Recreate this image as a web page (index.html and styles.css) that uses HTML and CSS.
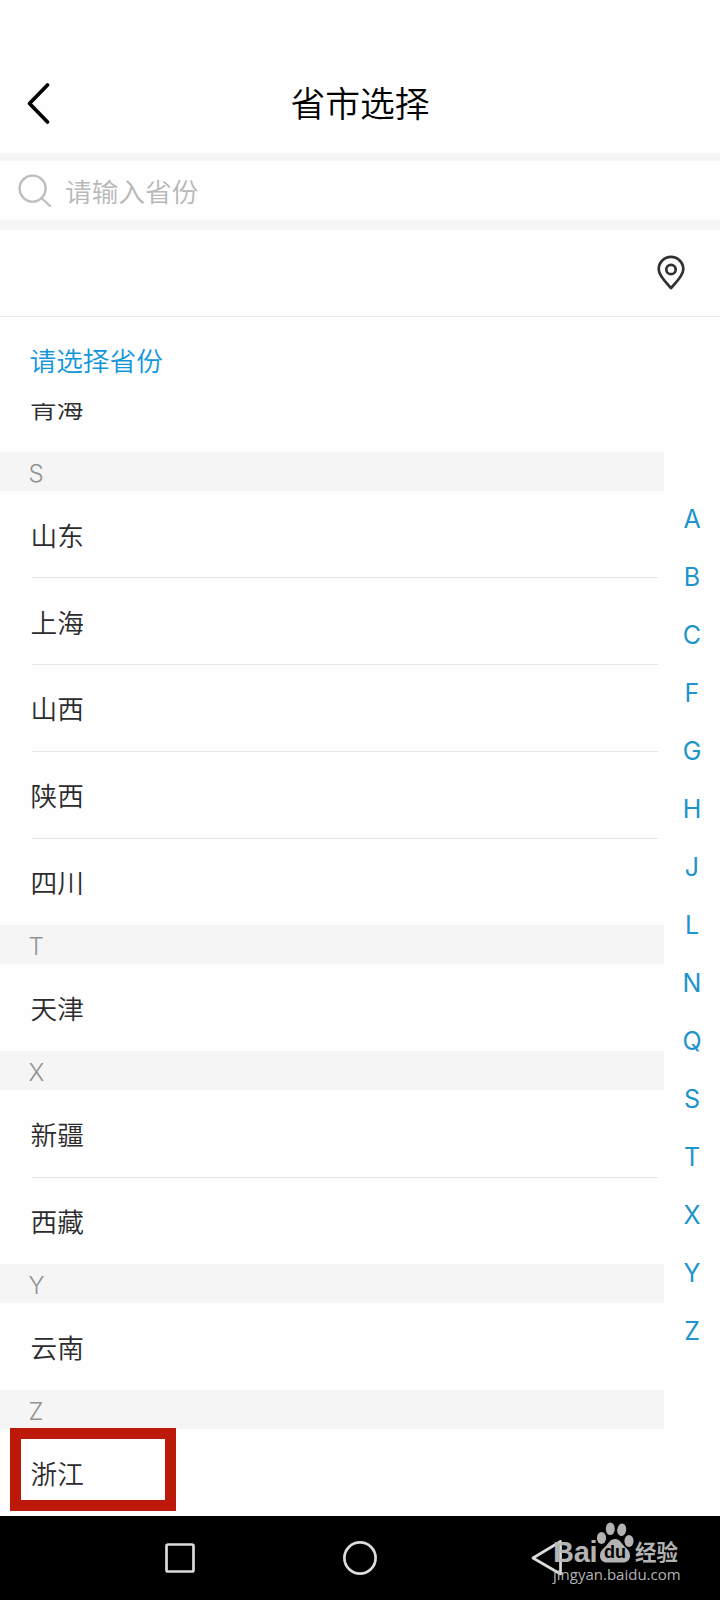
FILE: index.html
```
<!DOCTYPE html>
<html lang="zh-CN">
<head>
    <meta charset="UTF-8">
    <meta name="viewport" content="width=device-width, initial-scale=1.0">
    <title>省市选择</title>
    <link rel="stylesheet" href="styles.css">
</head>
<body>

    <header class="header">
        <svg class="back" width="26" height="44" viewBox="0 0 26 44"><path d="M22.5 3 4.500 21.500 22.5 40" fill="none" stroke="#000" stroke-width="3.7" stroke-linecap="round" stroke-linejoin="round"/></svg>
        <h1>省市选择</h1>
    </header>

    <div class="search">
        <svg width="34" height="34" viewBox="0 0 34 34" fill="none" stroke="#bebebe" stroke-width="2.4" stroke-linecap="round"><circle cx="14.6" cy="14.6" r="13"/><path d="m23.5 24 8.5 8"/></svg>
        <span>请输入省份</span>
    </div>

    <div class="location">
        <svg width="30" height="36" viewBox="0 0 30 36" fill="none" stroke="#303133" stroke-width="2.7" stroke-linejoin="round"><path d="M15 33C10 27.500 2.700 20.500 2.700 14.200a12.300 12.300 0 0 1 24.600 0C27.300 20.500 20 27.500 15 33Z"/><circle cx="15" cy="14.500" r="4.700"/></svg>
    </div>

    <div class="tip">请选择省份</div>

    <main class="content">
        <div class="list">
            <div class="clipped"><span>青海</span></div>
            <h2>S</h2>
            <ul>
                <li>山东</li>
                <li>上海</li>
                <li>山西</li>
                <li>陕西</li>
                <li>四川</li>
            </ul>
            <h2>T</h2>
            <ul>
                <li>天津</li>
            </ul>
            <h2>X</h2>
            <ul>
                <li>新疆</li>
                <li>西藏</li>
            </ul>
            <h2>Y</h2>
            <ul>
                <li>云南</li>
            </ul>
            <h2>Z</h2>
            <ul>
                <li class="marked">浙江</li>
            </ul>
        </div>
        <nav class="letters">
            <a>A</a>
            <a>B</a>
            <a>C</a>
            <a>F</a>
            <a>G</a>
            <a>H</a>
            <a>J</a>
            <a>L</a>
            <a>N</a>
            <a>Q</a>
            <a>S</a>
            <a>T</a>
            <a>X</a>
            <a>Y</a>
            <a>Z</a>
        </nav>
    </main>

    <footer class="navbar">
        <svg width="36" height="36" viewBox="0 0 36 36"><rect x="4.500" y="4.500" width="27" height="27" rx="1.500"/></svg>
        <svg width="36" height="36" viewBox="0 0 36 36"><circle cx="18" cy="18" r="15.600"/></svg>
        <svg width="36" height="36" viewBox="0 0 36 36"><path d="M34.500 1.500v32.500L7 18Z"/></svg>

        <!-- 水印 -->
        <div class="watermark">
            <div class="brand">
                <span class="bai">Bai</span>
                <span class="paw">
                    <svg width="38" height="42" viewBox="0 0 38 42"><ellipse cx="5.500" cy="16" rx="4.600" ry="6"/><ellipse cx="14.300" cy="6.800" rx="4.500" ry="6.300"/><ellipse cx="25.700" cy="7.800" rx="4.500" ry="6.300" transform="rotate(8 25.700 7.800)"/><ellipse cx="33" cy="19" rx="4.600" ry="6"/><path d="M19 17c5 0 6.500 4.500 9.500 7.500S34 29 34 34c0 4-3 6.500-7 6.500H11c-4 0-7-2.500-7-6.500 0-5 2.500-6.500 5.500-9.500S14 17 19 17Z"/></svg>
                    <b>du</b>
                </span>
                <span class="jingyan">经验</span>
            </div>
            <div class="site">jingyan.baidu.com</div>
        </div>
    </footer>

</body>
</html>
```

FILE: styles.css
```
*,
*::before,
*::after {
    box-sizing: border-box;
}
body {
    margin: 0;
    height: 1600px;
    display: flex;
    flex-direction: column;
    overflow: hidden;
    background-color: #fefefe;
    color: #2c2c2e;
    font-family: Inter, "Noto Sans CJK SC", sans-serif;
    font-size: 26.7px;
    font-weight: 350;
}
h1, h2, ul {
    margin: 0;
    padding: 0;
    font-weight: 350;
}
.header {
    height: 153px;
    display: grid;
    grid-template-columns: 50px 1fr 50px;
    align-items: center;
    padding: 55px 0 0;
}
.back {
    margin-left: 25px;
}
h1 {
    text-align: center;
    color: #000;
    font-size: 34.8px;
    line-height: 50px;
}
.search {
    height: 77px;
    display: flex;
    align-items: center;
    gap: 13px;
    padding-left: 18px;
    border-top: 8px solid #f5f5f5;
    border-bottom: 10px solid #f5f5f5;
    color: #b8b8b8;
}
.location {
    height: 87px;
    display: flex;
    align-items: center;
    justify-content: flex-end;
    padding: 0 34px 1px 0;
    border-bottom: 1px solid #e9e9e9;
}
.tip {
    height: 86px;
    padding-left: 29.5px;
    line-height: 89px;
    color: #1296db;
}
.content {
    flex: 1;
    min-height: 0;
    display: flex;
}
.list {
    width: 664px;
}
/* 列表滚动后被截断的一行 */
.clipped {
    height: 48.6px;
    display: flex;
    align-items: flex-end;
    padding: 0 30px;
    overflow: hidden;
}
.clipped span {
    line-height: 86.8px;
}
h2 {
    height: 39.3px;
    padding-left: 28.5px;
    background-color: #f5f5f5;
    color: #929292;
    font-size: 24px;
    line-height: 43px;
}
ul {
    list-style: none;
}
li {
    position: relative;
    height: 86.8px;
    padding-left: 30.5px;
    line-height: 90px;
}
li:not(:last-child)::after {
    content: "";
    position: absolute;
    left: 32px;
    right: 6px;
    bottom: -0.8px;
    height: 1px;
    background-color: #e6e6e6;
}
/* 红框标注 */
.marked::before {
    content: "";
    position: absolute;
    left: 10px;
    top: -1.5px;
    width: 166px;
    height: 83px;
    border: 11px solid #bd190b;
}
.letters {
    flex: 1;
    display: flex;
    flex-direction: column;
    padding-top: 87px;
    color: #1d94cc;
    font-size: 25px;
    font-weight: 380;
    line-height: 58px;
    text-align: center;
}
.navbar {
    position: relative;
    height: 84px;
    display: flex;
    justify-content: center;
    align-items: center;
    gap: 144px;
    background-color: #000;
}
.navbar > svg {
    fill: none;
    stroke: #dcdcdc;
    stroke-width: 2.7;
    stroke-linejoin: round;
}
/* 返回键 */
.navbar > svg:nth-of-type(3) {
    margin-right: -4px;
    margin-left: 4px;
}
.watermark {
    position: absolute;
    left: 553px;
    top: 6px;
    color: #bdbdbd;
    opacity: 0.95;
}
.brand {
    display: flex;
    align-items: flex-end;
    height: 42px;
}
.bai {
    width: 43px;
    font: bold 29px/29px "Liberation Sans", sans-serif;
    letter-spacing: -0.3px;
    margin-bottom: -3px;
}
.paw {
    position: relative;
    width: 38px;
    height: 42px;
    fill: #bdbdbd;
}
.paw b {
    position: absolute;
    left: 0;
    right: 0;
    bottom: 2px;
    color: #000;
    font: bold 18px/20px "Liberation Sans", sans-serif;
    text-align: center;
}
.jingyan {
    margin-left: 1px;
    font-size: 21.5px;
    font-weight: 700;
    line-height: 24px;
}
.site {
    font: 15px/20px "Open Sans", sans-serif;
    white-space: nowrap;
}
```
